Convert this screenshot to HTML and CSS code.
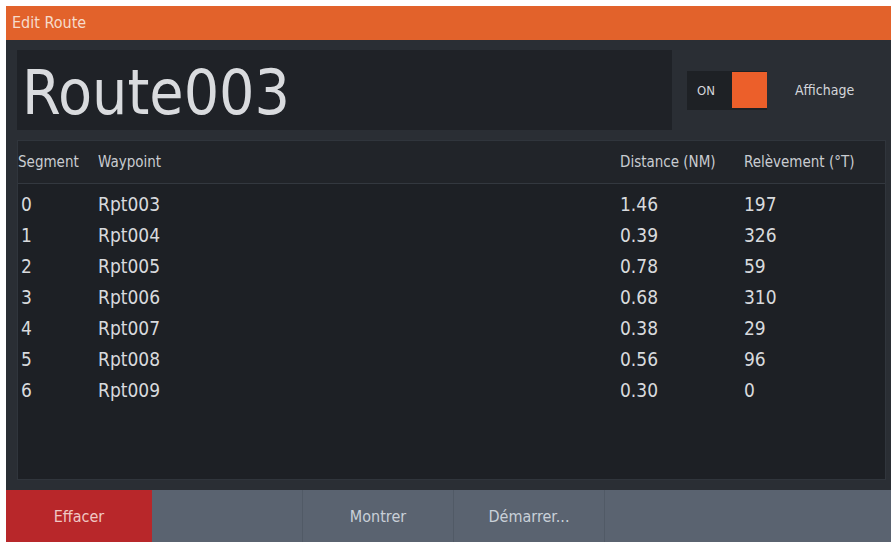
FILE: index.html
```html
<!DOCTYPE html>
<html lang="fr">
<head>
    <meta charset="UTF-8">
    <title>Edit Route</title>
    <link rel="stylesheet" href="styles.css">
</head>
<body>
    <div class="panel">
        <div class="title-bar">Edit Route</div>
        <div class="content">
            <div class="name-row">
                <div class="name-box">Route003</div>
                <div class="toggle">
                    <span class="toggle-label">ON</span>
                    <span class="toggle-box"></span>
                </div>
                <div class="display-label">Affichage</div>
            </div>
            <div class="table">
                <div class="row head">
                    <span>Segment</span>
                    <span>Waypoint</span>
                    <span>Distance (NM)</span>
                    <span>Relèvement (°T)</span>
                </div>
                <div class="rows">
                    <div class="row"><span>0</span><span>Rpt003</span><span>1.46</span><span>197</span></div>
                    <div class="row"><span>1</span><span>Rpt004</span><span>0.39</span><span>326</span></div>
                    <div class="row"><span>2</span><span>Rpt005</span><span>0.78</span><span>59</span></div>
                    <div class="row"><span>3</span><span>Rpt006</span><span>0.68</span><span>310</span></div>
                    <div class="row"><span>4</span><span>Rpt007</span><span>0.38</span><span>29</span></div>
                    <div class="row"><span>5</span><span>Rpt008</span><span>0.56</span><span>96</span></div>
                    <div class="row"><span>6</span><span>Rpt009</span><span>0.30</span><span>0</span></div>
                </div>
            </div>
        </div>
        <div class="button-bar">
            <div class="btn btn-delete">Effacer</div>
            <div class="btn"></div>
            <div class="btn">Montrer</div>
            <div class="btn">Démarrer...</div>
        </div>
    </div>
</body>
</html>
```

FILE: styles.css
```css
body {
    margin: 0;
    padding: 6px 5px 0 6px;
    background: #ffffff;
    font-family: "DejaVu Sans Condensed", "DejaVu Sans", sans-serif;
    overflow: hidden;
}
.panel {
    height: 536px;
    background: #2a2e34;
    display: flex;
    flex-direction: column;
    overflow: hidden;
}
.title-bar {
    height: 34px;
    background: #e2622b;
    color: #f6dccb;
    font-size: 16px;
    line-height: 34px;
    padding-left: 6px;
}
.content {
    padding: 10px 5px 0 11px;
    flex: 1;
}
.name-row {
    display: flex;
    align-items: center;
    height: 80px;
}
.name-box {
    width: 650px;
    height: 80px;
    background: #1f2227;
    color: #d9dbde;
    font-size: 62px;
    line-height: 86px;
    padding-left: 5px;
}
.toggle {
    margin-left: 15px;
    width: 80px;
    height: 39px;
    background: #1e2125;
    display: flex;
    align-items: center;
}
.toggle-label {
    color: #d4d6da;
    font-size: 13px;
    margin-left: 10px;
    width: 35px;
}
.toggle-box {
    width: 35px;
    height: 36px;
    background: #ec5f2a;
}
.display-label {
    margin-left: 28px;
    color: #d4d6da;
    font-size: 14px;
}
.table {
    margin-top: 10px;
    height: 338px;
    background: #1d2025;
    border: 1px solid #30353c;
}
.row {
    display: grid;
    grid-template-columns: 80px 522px 124px 1fr;
    height: 31px;
    align-items: center;
    color: #d8dadd;
    font-size: 19px;
}
.row span:first-child {
    padding-left: 3px;
}
.head {
    height: 42px;
    background: #212429;
    border-bottom: 1px solid #33383f;
    font-size: 15px;
    color: #c9ccd1;
}
.head span:first-child {
    padding-left: 0;
}
.rows {
    padding-top: 4px;
}
.button-bar {
    height: 52px;
    margin-top: 10px;
    background: #5a6370;
    display: flex;
}
.btn {
    width: 150px;
    border-right: 1px solid #515a66;
    color: #c9d0d8;
    font-size: 16px;
    display: flex;
    align-items: center;
    justify-content: center;
}
.btn-delete {
    width: 146px;
    background: #b8272a;
    color: #f0c8c4;
    border-right: none;
}
```
